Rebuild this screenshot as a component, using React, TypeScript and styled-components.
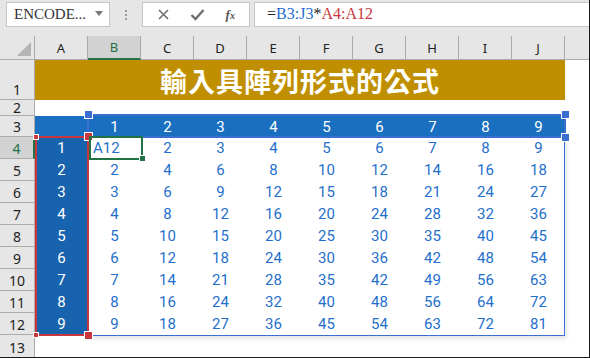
import React from 'react';
import styled, { createGlobalStyle } from 'styled-components';

const GlobalStyle = createGlobalStyle`
  html, body {
    margin: 0;
    padding: 0;
    background: #fff;
  }
`;

const COL_W = 53;
const HEAD_W = 35;
const rowTops = [60, 100, 116, 137];

const Window = styled.div`
  position: relative;
  width: 590px;
  height: 358px;
  overflow: hidden;
  box-sizing: border-box;
  border-bottom: 1px solid #1a1a1a;
  border-right: 1px solid #1a1a1a;
  font-family: Roboto, "Noto Sans", sans-serif;
`;

const FormulaBar = styled.div`
  display: flex;
  align-items: flex-start;
  height: 36px;
  padding: 2px 0 0 6px;
  box-sizing: border-box;
  background: #e6e6e6;
`;

const NameBox = styled.div`
  display: flex;
  align-items: center;
  justify-content: space-between;
  width: 104px;
  height: 25px;
  box-sizing: border-box;
  padding: 0 6px 0 7px;
  background: #fff;
  border: 1px solid #c6c6c6;
  font-family: "Liberation Serif", serif;
  font-size: 15px;
  color: #333;
`;

const Caret = styled.span`
  width: 0;
  height: 0;
  border-left: 4px solid transparent;
  border-right: 4px solid transparent;
  border-top: 5px solid #777;
  margin-top: -2px;
`;

const Dots = styled.div`
  display: flex;
  flex-direction: column;
  gap: 2px;
  width: 32px;
  height: 25px;
  align-items: center;
  justify-content: center;
  & > i {
    width: 2px;
    height: 2px;
    background: #9a9a9a;
  }
`;

const IconBox = styled.div`
  display: flex;
  align-items: center;
  justify-content: space-around;
  width: 108px;
  height: 25px;
  box-sizing: border-box;
  padding: 0 4px;
  background: #fff;
  border: 1px solid #c6c6c6;
  color: #6f6f6f;
`;

const Fx = styled.span`
  font-family: "Liberation Serif", serif;
  font-style: italic;
  font-size: 13px;
  color: #555;
  font-weight: bold;
  & sub {
    font-size: 10px;
    vertical-align: baseline;
  }
`;

const FormulaInput = styled.div`
  flex: 1;
  height: 25px;
  margin-left: 4px;
  box-sizing: border-box;
  padding: 2px 0 0 12px;
  background: #fff;
  border: 1px solid #c6c6c6;
  border-right: none;
  font-family: "Liberation Serif", serif;
  font-size: 16px;
  color: #222;
`;

const Ref = styled.span<{ $c: string }>`
  color: ${(p) => p.$c};
`;

const Sheet = styled.div`
  display: grid;
  grid-template-columns: ${HEAD_W}px repeat(10, ${COL_W}px) 1fr;
  grid-template-rows: 24px 40px 16px 21px repeat(9, 22px) 1fr;
  height: 322px;
`;

const Corner = styled.div`
  position: relative;
  background: #e6e6e6;
  border-right: 1px solid #ababab;
  border-bottom: 1px solid #ababab;
  &::after {
    content: '';
    position: absolute;
    right: 3px;
    bottom: 3px;
    border-left: 14px solid transparent;
    border-bottom: 14px solid #b4b4b4;
  }
`;

const ColHead = styled.div<{ $active?: boolean }>`
  display: flex;
  align-items: center;
  justify-content: center;
  background: ${(p) => (p.$active ? '#d2d2d2' : '#e6e6e6')};
  border-right: 1px solid #ababab;
  border-bottom: ${(p) => (p.$active ? '2px solid #217346' : '1px solid #ababab')};
  box-sizing: border-box;
  font-family: "Noto Sans", sans-serif;
  font-size: 13px;
  color: ${(p) => (p.$active ? '#217346' : '#222')};
`;

const HeadFill = styled.div`
  background: #e6e6e6;
  border-bottom: 1px solid #ababab;
`;

const RowHead = styled.div<{ $active?: boolean; $tight?: boolean }>`
  display: flex;
  align-items: flex-end;
  justify-content: center;
  background: ${(p) => (p.$active ? '#d2d2d2' : '#e6e6e6')};
  border-right: ${(p) => (p.$active ? '2px solid #217346' : '1px solid #ababab')};
  border-bottom: 1px solid #ababab;
  box-sizing: border-box;
  font-family: "Noto Sans", sans-serif;
  font-size: 14px;
  line-height: ${(p) => (p.$tight ? '14px' : '15px')};
  padding-bottom: ${(p) => (p.$tight ? '0' : '2px')};
  color: ${(p) => (p.$active ? '#217346' : '#222')};
`;

const Title = styled.div`
  grid-column: 2 / span 10;
  display: flex;
  align-items: center;
  justify-content: center;
  background: #bf8f00;
  color: #fff;
  font-family: "Noto Sans CJK TC", "Noto Sans CJK SC", sans-serif;
  font-weight: 700;
  font-size: 27px;
  letter-spacing: 1px;
`;

const Cell = styled.div<{ $bg?: string; $color?: string; $left?: boolean }>`
  display: flex;
  align-items: center;
  justify-content: ${(p) => (p.$left ? 'flex-start' : 'center')};
  padding-left: ${(p) => (p.$left ? '5px' : '0')};
  background: ${(p) => p.$bg || '#fff'};
  color: ${(p) => p.$color || '#1f6fcb'};
  font-size: 15px;
`;

const Frame = styled.div<{ $color: string; $w: number }>`
  position: absolute;
  box-sizing: border-box;
  border: ${(p) => p.$w}px solid ${(p) => p.$color};
  pointer-events: none;
`;

const Handle = styled.div<{ $color: string; $size?: number }>`
  position: absolute;
  width: ${(p) => p.$size || 7}px;
  height: ${(p) => p.$size || 7}px;
  background: ${(p) => p.$color};
  outline: 1px solid #fff;
`;

const colX = (i: number) => HEAD_W + i * COL_W;
const rowY = (r: number) => (r <= 4 ? rowTops[r - 1] : 137 + (r - 4) * 22);

const BLUE_A = '#1763ad';
const BLUE_3 = '#1a6fc1';
const RANGE_BLUE = '#3a6fd1';
const RANGE_RED = '#c8373d';
const GREEN = '#217346';

export default function App() {
  const cols = ['A', 'B', 'C', 'D', 'E', 'F', 'G', 'H', 'I', 'J'];
  const bodyRows = [1, 2, 3, 4, 5, 6, 7, 8, 9];

  return (
    <Window>
      <GlobalStyle />
      <FormulaBar>
        <NameBox>
          <span>ENCODE...</span>
          <Caret />
        </NameBox>
        <Dots>
          <i />
          <i />
          <i />
        </Dots>
        <IconBox>
          <svg width="13" height="13" viewBox="0 0 13 13">
            <path d="M2 2 L11 11 M11 2 L2 11" stroke="#6f6f6f" strokeWidth="1.6" />
          </svg>
          <svg width="15" height="13" viewBox="0 0 15 13">
            <path d="M1.5 7 L5.5 11 L13.5 2" stroke="#6f6f6f" strokeWidth="2.4" fill="none" />
          </svg>
          <Fx>
            f<sub>x</sub>
          </Fx>
        </IconBox>
        <FormulaInput>
          =<Ref $c="#2a6bd0">B3:J3</Ref>*<Ref $c="#c8373d">A4:A12</Ref>
        </FormulaInput>
      </FormulaBar>

      <Sheet>
        <Corner />
        {cols.map((c) => (
          <ColHead key={c} $active={c === 'B'}>
            {c}
          </ColHead>
        ))}
        <HeadFill />

        <RowHead>1</RowHead>
        <Title>輸入具陣列形式的公式</Title>
        <Cell />

        <RowHead $tight>2</RowHead>
        {cols.map((c) => (
          <Cell key={c} />
        ))}
        <Cell />

        <RowHead>3</RowHead>
        <Cell $bg={BLUE_3} />
        {bodyRows.map((n) => (
          <Cell key={n} $bg={BLUE_3} $color="#fff">
            {n}
          </Cell>
        ))}
        <Cell />

        {bodyRows.map((r) => (
          <React.Fragment key={r}>
            <RowHead $active={r === 1}>{r + 3}</RowHead>
            <Cell $bg={BLUE_A} $color="#fff">
              {r}
            </Cell>
            {bodyRows.map((c) =>
              r === 1 && c === 1 ? (
                <Cell key={c} $left>
                  A12
                </Cell>
              ) : (
                <Cell key={c}>{r * c}</Cell>
              )
            )}
            <Cell />
          </React.Fragment>
        ))}

        <RowHead>13</RowHead>
      </Sheet>

      {/* table border B4:J12 */}
      <Frame
        $color={RANGE_BLUE}
        $w={1}
        style={{
          left: colX(1),
          top: rowY(4),
          width: colX(10) - colX(1),
          height: rowY(13) - rowY(4) + 1,
          boxShadow: '2px 3px 4px rgba(0,0,0,0.10)',
        }}
      />

      {/* range reference B3:J3 */}
      <Frame
        $color={RANGE_BLUE}
        $w={2}
        style={{
          left: colX(1) - 1,
          top: rowY(3) - 2,
          width: colX(10) - colX(1) + 2,
          height: rowY(4) - rowY(3) + 3,
        }}
      />
      <Handle $color={RANGE_BLUE} style={{ left: colX(1) - 3, top: rowY(3) - 5 }} />
      <Handle $color={RANGE_BLUE} style={{ left: colX(10) - 3, top: rowY(3) - 5 }} />
      <Handle $color={RANGE_BLUE} style={{ left: colX(10) - 3, top: rowY(4) - 3 }} />

      {/* range reference A4:A12 */}
      <Frame
        $color={RANGE_RED}
        $w={2}
        style={{
          left: colX(0),
          top: rowY(4) - 1,
          width: COL_W + 1,
          height: rowY(13) - rowY(4) + 2,
        }}
      />
      <Handle $color={RANGE_RED} style={{ left: colX(1) - 3, top: rowY(4) - 4 }} />
      <Handle $color={RANGE_RED} style={{ left: colX(1) - 3, top: rowY(13) - 3 }} />
      <Handle $color={RANGE_RED} $size={4} style={{ left: colX(0) - 1, top: rowY(4) - 2 }} />
      <Handle $color={RANGE_RED} $size={4} style={{ left: colX(0) - 1, top: rowY(13) - 2 }} />

      {/* active cell B4 */}
      <Frame
        $color={GREEN}
        $w={2}
        style={{
          left: colX(1) + 1,
          top: rowY(4) - 1,
          width: COL_W + 1,
          height: 24,
        }}
      />
      <Handle $color={GREEN} $size={5} style={{ left: colX(2) - 1, top: rowY(5) - 3 }} />
    </Window>
  );
}
